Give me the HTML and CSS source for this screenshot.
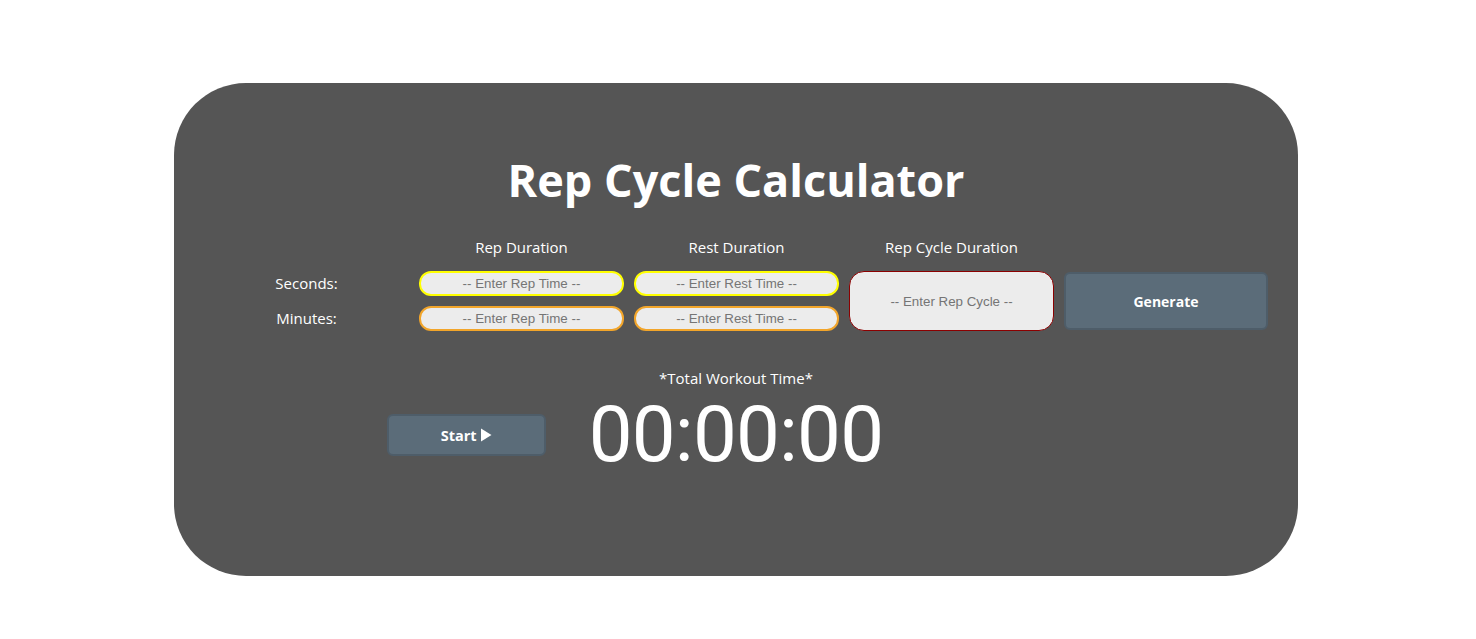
FILE: index.html
```html
<!DOCTYPE html>
<html lang="en">
<head>
<meta charset="utf-8">
<title>Rep Cycle Calculator</title>
<link rel="stylesheet" href="styles.css">
</head>
<body>
<main class="card">
  <h1 class="title">Rep Cycle Calculator</h1>
  <div class="form-grid">
    <div class="spacer"></div>
    <div class="head">Rep Duration</div>
    <div class="head">Rest Duration</div>
    <div class="head">Rep Cycle Duration</div>
    <div class="spacer"></div>

    <label class="row-label" for="rep-sec">Seconds:</label>
    <input class="pill pill-sec" id="rep-sec" type="text" placeholder="-- Enter Rep Time --">
    <input class="pill pill-sec" id="rest-sec" type="text" placeholder="-- Enter Rest Time --">
    <input class="cycle" id="cycle" type="text" placeholder="-- Enter Rep Cycle --">
    <button class="btn btn-generate" type="button">Generate</button>

    <label class="row-label" for="rep-min">Minutes:</label>
    <input class="pill pill-min" id="rep-min" type="text" placeholder="-- Enter Rep Time --">
    <input class="pill pill-min" id="rest-min" type="text" placeholder="-- Enter Rest Time --">
  </div>

  <div class="caption">*Total Workout Time*</div>
  <div class="timer-row">
    <button class="btn btn-start" type="button">Start<svg class="play" viewBox="0 0 12 14" width="12" height="14" aria-hidden="true"><path d="M1 0.5 L11.5 7 L1 13.5 Z" fill="#ffffff"/></svg></button>
    <div class="timer">00:00:00</div>
    <div class="spacer"></div>
  </div>
</main>
</body>
</html>
```
FILE: styles.css
```css
html, body {
  margin: 0;
  padding: 0;
  background: #ffffff;
}

body {
  font-family: "Open Sans", "Noto Sans", sans-serif;
  color: #ffffff;
}

.card {
  box-sizing: border-box;
  width: 1124px;
  height: 493px;
  margin: 83px 0 0 174px;
  padding: 0 30px;
  background: #555555;
  border-radius: 72px;
}

.title {
  margin: 0;
  padding-top: 64px;
  font-size: 45px;
  line-height: 66px;
  font-weight: 700;
  text-align: center;
}

.form-grid {
  display: grid;
  grid-template-columns: repeat(5, 205px);
  grid-template-rows: 22px 25px 25px;
  column-gap: 10px;
  row-gap: 10px;
  margin-top: 26px;
}

.form-grid > .head {
  font-size: 15px;
  line-height: 22px;
  text-align: center;
  margin-top: -3px;
}

.row-label {
  font-size: 15px;
  line-height: 25px;
  text-align: center;
}

.pill,
.cycle {
  box-sizing: border-box;
  width: 100%;
  margin: 0;
  background: #ececec;
  font-family: "Liberation Sans", Arial, sans-serif;
  font-size: 13.33px;
  text-align: center;
  color: #333;
  outline: none;
}

.pill {
  height: 25px;
  border-radius: 12px;
  border: 2px solid #ffff00;
}

.pill-min {
  border-color: #f2a52a;
}

.cycle {
  grid-row: 2 / span 2;
  grid-column: 4;
  height: 60px;
  border: 1px solid #8b0000;
  border-radius: 15px;
}

.pill::placeholder,
.cycle::placeholder {
  color: #757575;
}

.btn {
  box-sizing: border-box;
  background: #5b6c79;
  border: 2px solid #4e5d69;
  border-radius: 6px;
  color: #ffffff;
  font-family: "Open Sans", "Noto Sans", sans-serif;
  font-weight: 700;
  font-size: 14px;
  cursor: pointer;
}

.btn-generate {
  grid-row: 2 / span 2;
  grid-column: 5;
  height: 58px;
  margin-top: 1px;
  width: 204px;
}

.caption {
  margin-top: 36px;
  font-size: 15px;
  line-height: 22px;
  text-align: center;
}

.timer-row {
  display: grid;
  grid-template-columns: 1fr 1fr 1fr;
  align-items: start;
  margin-top: 8px;
}

.btn-start {
  justify-self: end;
  display: flex;
  align-items: center;
  justify-content: center;
  gap: 3px;
  width: 159px;
  height: 42px;
  margin-right: 13px;
  margin-top: 17px;
  font-size: 14.5px;
}

.play {
  display: block;
}

.timer {
  justify-self: center;
  font-family: Roboto, "Open Sans", sans-serif;
  font-size: 78px;
  line-height: 76px;
  letter-spacing: -0.8px;
  font-weight: 400;
}
```
